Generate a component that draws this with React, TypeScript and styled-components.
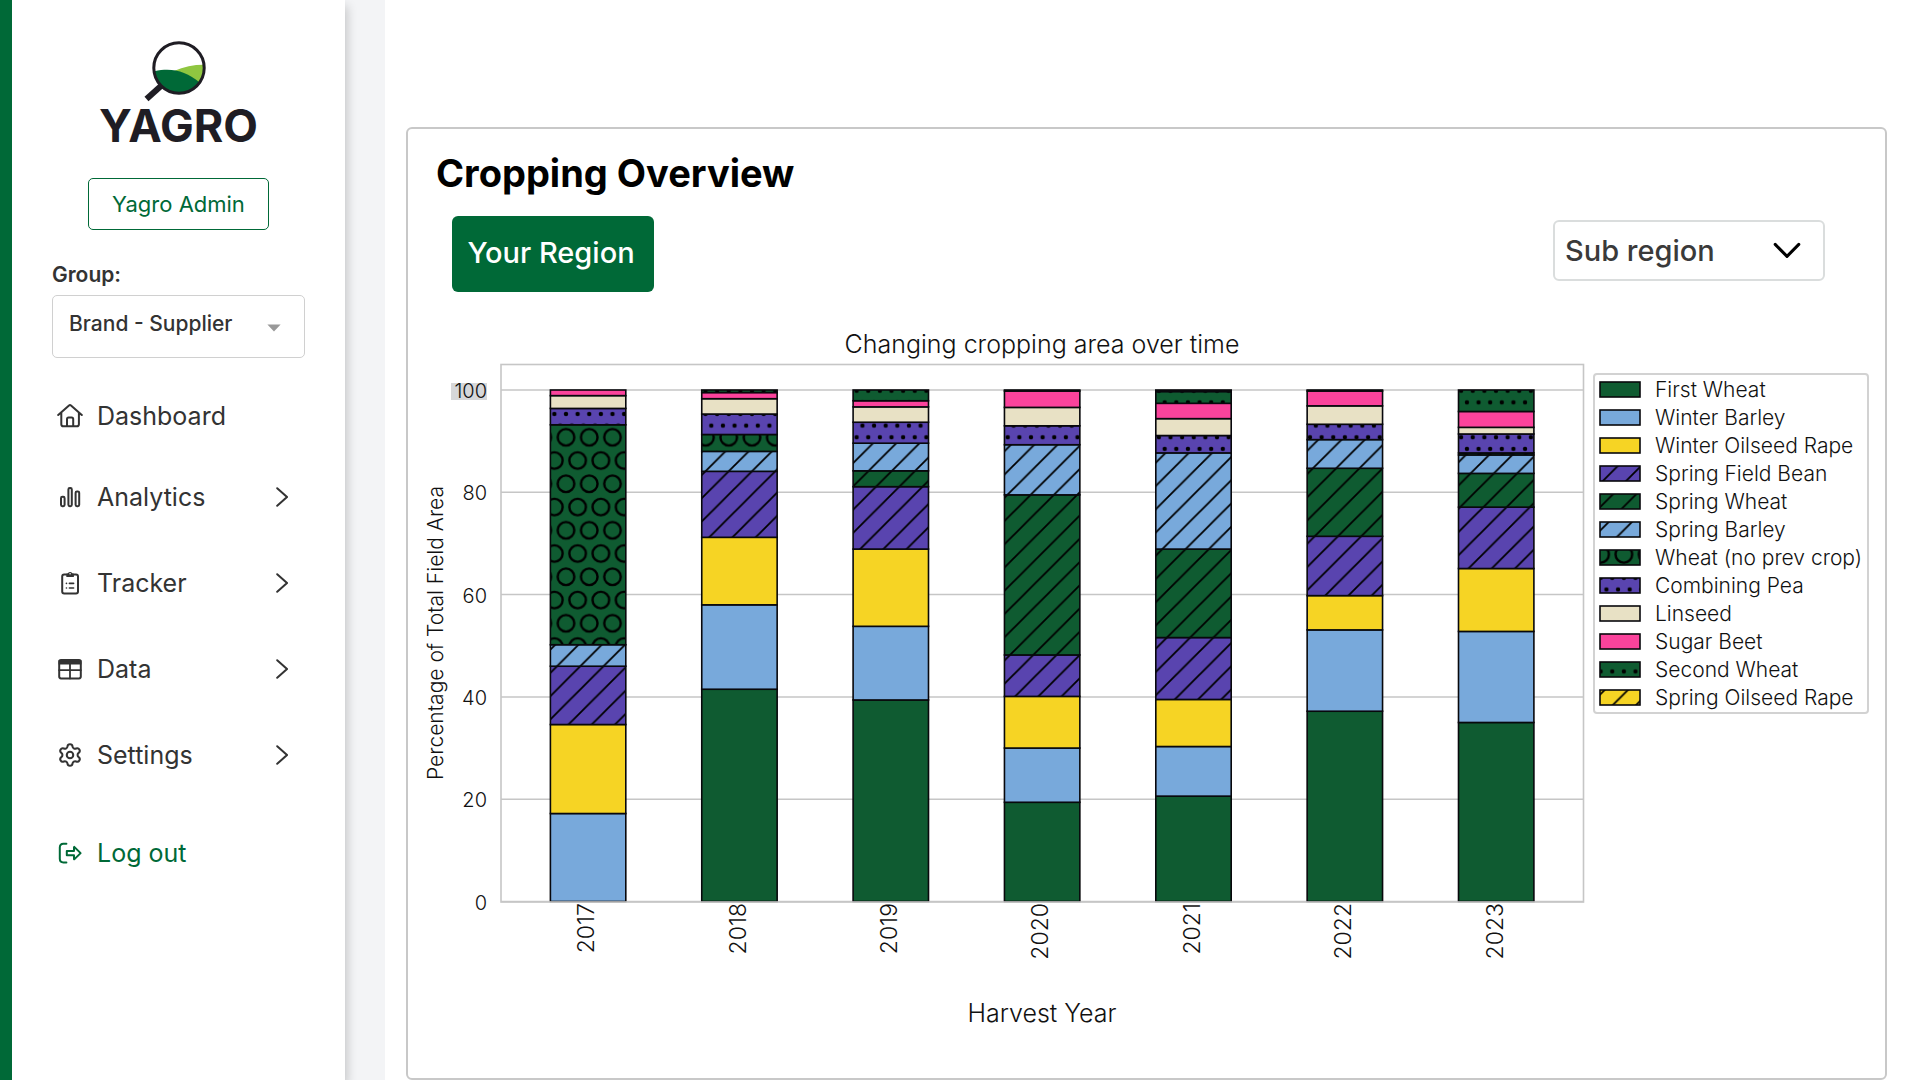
import React from "react";
import styled, { createGlobalStyle } from "styled-components";
import { Settings } from "lucide-react";

const GlobalStyle = createGlobalStyle`
  *, *::before, *::after { box-sizing: border-box; }
  body {
    margin: 0;
    background: #fff;
    color: #333;
    font-family: Inter, "Open Sans", sans-serif;
  }
`;

const GREEN = "#006937";

/* ---------- layout ---------- */

const Shell = styled.div`
  display: flex;
  min-height: 100vh;
  background: #f3f4f6;
`;

const Sidebar = styled.aside`
  flex: none;
  display: flex;
  flex-direction: column;
  width: 345px;
  padding: 40px 40px 0;
  border-left: 12px solid ${GREEN};
  background: #fff;
  box-shadow: 2px 6px 10px rgba(0, 0, 0, 0.2);
`;

const Main = styled.main`
  flex: 1;
  min-width: 0;
  display: flex;
  flex-direction: column;
  margin-left: 40px;
  padding: 127px 33px 0 21px;
  background: #fff;
`;

/* ---------- sidebar ---------- */

const Brand = styled.a`
  display: flex;
  flex-direction: column;
  align-items: center;
  color: #1f1d24;
  text-decoration: none;
`;

const Glass = styled.svg`
  display: block;
  width: 70px;
  height: 62px;
`;

const Wordmark = styled.span`
  font-size: 45px;
  font-weight: 700;
  line-height: 48px;
`;

const AdminButton = styled.button`
  align-self: center;
  width: 181px;
  height: 52px;
  margin-top: 28px;
  padding: 0;
  border: 1px solid ${GREEN};
  border-radius: 5px;
  background: #fff;
  color: ${GREEN};
  font: 400 22px Inter, sans-serif;
`;

const GroupLabel = styled.label`
  margin: 33px 0 8px;
  font-size: 21px;
  font-weight: 600;
  line-height: 24px;
`;

const SelectBox = styled.div`
  position: relative;
`;

const GroupSelect = styled.select`
  appearance: none;
  display: block;
  width: 100%;
  height: 63px;
  padding: 0 40px 6px 16px;
  border: 1px solid #d0d0d0;
  border-radius: 5px;
  background: #fff;
  color: #333;
  font: 500 21px Inter, sans-serif;
`;

const Caret = styled.svg`
  position: absolute;
  right: 24px;
  top: 29px;
  width: 14px;
  height: 8px;
  pointer-events: none;
`;

const Nav = styled.nav`
  display: flex;
  flex-direction: column;
  margin-top: 20px;
`;

const NavLink = styled.a<{ $first?: boolean; $exit?: boolean }>`
  display: flex;
  align-items: center;
  gap: 14px;
  height: ${(p) => (p.$first ? 76 : 86)}px;
  margin-top: ${(p) => (p.$exit ? 12 : 0)}px;
  padding: 0 17px 0 5px;
  color: ${(p) => (p.$exit ? GREEN : "#333")};
  font-size: 25px;
  font-weight: 400;
  text-decoration: none;
`;

const NavIcon = styled.svg`
  flex: none;
  width: 26px;
  height: 26px;
  fill: none;
  stroke: currentColor;
  stroke-width: 2;
  stroke-linecap: round;
  stroke-linejoin: round;
`;

const Chevron = styled.svg`
  width: 12px;
  height: 20px;
  margin-left: auto;
  fill: none;
  stroke: currentColor;
  stroke-width: 2;
  stroke-linecap: round;
`;

/* ---------- card ---------- */

const Card = styled.section`
  flex: 1;
  display: flex;
  flex-direction: column;
  padding: 20px 16px 20px 12px;
  border: 2px solid #c8c8c8;
  border-radius: 6px;
`;

const Title = styled.h1`
  margin: 0 16px;
  color: #000;
  font-size: 38px;
  font-weight: 700;
  line-height: 48px;
`;

const Toolbar = styled.div`
  display: flex;
  align-items: flex-start;
  justify-content: space-between;
  margin: 19px 44px 28px 32px;
`;

const RegionButton = styled.button`
  width: 202px;
  height: 76px;
  padding: 0 4px 4px 0;
  border: 0;
  border-radius: 6px;
  background: ${GREEN};
  color: #fff;
  font: 500 29px Inter, sans-serif;
`;

const RegionBox = styled(SelectBox)`
  width: 272px;
  margin-top: 4px;
`;

const RegionSelect = styled.select`
  appearance: none;
  display: block;
  width: 100%;
  height: 61px;
  padding: 0 60px 0 10px;
  border: 2px solid #dadddd;
  border-radius: 6px;
  background: #fff;
  color: #3a3a3a;
  font: 500 29px Inter, sans-serif;
`;

const RegionChevron = styled.svg`
  position: absolute;
  right: 24px;
  top: 22px;
  width: 28px;
  height: 18px;
  fill: none;
  stroke: #000;
  stroke-width: 3;
  stroke-linecap: round;
  stroke-linejoin: round;
  pointer-events: none;
`;

const ChartRow = styled.div`
  display: flex;
  align-items: flex-start;
  gap: 8px;
`;

const ChartSvg = styled.svg`
  display: block;
  flex: 1;
  min-width: 0;
  font-family: Inter, sans-serif;
  font-weight: 300;
  fill: #111;
`;

const Legend = styled.ul`
  flex: none;
  width: 276px;
  margin: 53px 0 0;
  padding: 0 4px 1px;
  border: 2px solid #d2d2d2;
  border-radius: 4px;
  list-style: none;
`;

const LegendItem = styled.li`
  display: flex;
  align-items: center;
  gap: 14px;
  height: 28px;
  color: #111;
  font-size: 21px;
  font-weight: 300;
  white-space: nowrap;
`;

const Swatch = styled.svg`
  flex: none;
  width: 42px;
  height: 17px;
`;

/* ---------- data ---------- */

type Crop = { name: string; color: string; hatch?: "diagonal" | "rings" | "dots" };

const CROPS: Record<string, Crop> = {
  FW: { name: "First Wheat", color: "#0f5b31" },
  WB: { name: "Winter Barley", color: "#78a9db" },
  WO: { name: "Winter Oilseed Rape", color: "#f6d424" },
  FB: { name: "Spring Field Bean", color: "#5944af", hatch: "diagonal" },
  SW: { name: "Spring Wheat", color: "#0f5b31", hatch: "diagonal" },
  SB: { name: "Spring Barley", color: "#78a9db", hatch: "diagonal" },
  NP: { name: "Wheat (no prev crop)", color: "#0f5b31", hatch: "rings" },
  CP: { name: "Combining Pea", color: "#5944af", hatch: "dots" },
  LI: { name: "Linseed", color: "#e8e1c5" },
  BE: { name: "Sugar Beet", color: "#fb439c" },
  S2: { name: "Second Wheat", color: "#0f5b31", hatch: "dots" },
  SO: { name: "Spring Oilseed Rape", color: "#f6d424", hatch: "diagonal" },
};

/* Each entry is a crop and the cumulative percentage at its upper edge. */
const YEARS: { year: number; stack: [string, number][] }[] = [
  { year: 2017, stack: [["WB", 17.2], ["WO", 34.6], ["FB", 46], ["SB", 50.2], ["NP", 93.2], ["CP", 96.4], ["LI", 98.9], ["BE", 100]] },
  { year: 2018, stack: [["FW", 41.5], ["WB", 58], ["WO", 71.2], ["FB", 84.1], ["SB", 88], ["NP", 91.3], ["CP", 95.3], ["LI", 98.3], ["BE", 99.5], ["S2", 100]] },
  { year: 2019, stack: [["FW", 39.4], ["WB", 53.8], ["WO", 68.9], ["FB", 81.1], ["SW", 84.2], ["SB", 89.6], ["CP", 93.7], ["LI", 96.7], ["BE", 97.9], ["S2", 100]] },
  { year: 2020, stack: [["FW", 19.4], ["WB", 30], ["WO", 40.1], ["FB", 48.2], ["SW", 79.5], ["SB", 89.3], ["CP", 93], ["LI", 96.6], ["BE", 99.8], ["S2", 100]] },
  { year: 2021, stack: [["FW", 20.6], ["WB", 30.3], ["WO", 39.5], ["FB", 51.6], ["SW", 68.9], ["SB", 87.7], ["CP", 91.1], ["LI", 94.4], ["BE", 97.4], ["S2", 99.7], ["SO", 100]] },
  { year: 2022, stack: [["FW", 37.2], ["WB", 53.1], ["WO", 59.8], ["FB", 71.4], ["SW", 84.7], ["SB", 90.3], ["CP", 93.3], ["LI", 96.9], ["BE", 99.8], ["S2", 100]] },
  { year: 2023, stack: [["FW", 35], ["WB", 52.8], ["WO", 65.1], ["FB", 77.1], ["SW", 83.7], ["SB", 87.3], ["NP", 87.7], ["CP", 91.4], ["LI", 92.7], ["BE", 95.8], ["S2", 100]] },
];

const TICKS = [0, 20, 40, 60, 80, 100];
const BASE = 901.5;
const UNIT = 5.115;
const yAt = (v: number) => BASE - v * UNIT;
const P = 23.25;

function Hatches() {
  return (
    <defs>
      <pattern id="diagonal" patternUnits="userSpaceOnUse" x={14.25} y={0} width={P} height={P}>
        <path
          d={`M0 ${P}L${P} 0M-3 3L3 -3M${P - 3} ${P + 3}L${P + 3} ${P - 3}`}
          stroke="#000"
          strokeWidth={1.8}
        />
      </pattern>
      <pattern id="rings" patternUnits="userSpaceOnUse" x={566 - P / 2} y={437.3 - P / 2} width={P} height={P * 2}>
        <g fill="none" stroke="#000" strokeWidth={2.4}>
          <circle cx={P / 2} cy={P / 2} r={8.3} />
          <circle cx={0} cy={P * 1.5} r={8.3} />
          <circle cx={P} cy={P * 1.5} r={8.3} />
        </g>
      </pattern>
      <pattern id="dots" patternUnits="userSpaceOnUse" x={566 - P / 4} y={414 - P / 4} width={P / 2} height={P}>
        <circle cx={P / 4} cy={P / 4} r={2.2} fill="#000" />
        <circle cx={0} cy={P * 0.75} r={2.2} fill="#000" />
        <circle cx={P / 2} cy={P * 0.75} r={2.2} fill="#000" />
      </pattern>
    </defs>
  );
}

function Block({ crop, x, y, w, h }: { crop: Crop; x: number; y: number; w: number; h: number }) {
  return (
    <g>
      <rect x={x} y={y} width={w} height={h} fill={crop.color} />
      {crop.hatch && <rect x={x} y={y} width={w} height={h} fill={`url(#${crop.hatch})`} />}
      <rect x={x} y={y} width={w} height={h} fill="none" stroke="#08080c" strokeWidth={1.6} />
    </g>
  );
}

function Chart() {
  return (
    <ChartSvg viewBox="420 320 1165 720" role="img" aria-label="Changing cropping area over time">
      <Hatches />
      <text x={1042} y={353} fontSize={25} textAnchor="middle">Changing cropping area over time</text>
      <rect x={451} y={383} width={36} height={17} fill="#d6d7d9" />
      {TICKS.map((t) => (
        <g key={t}>
          <line x1={501} x2={1584} y1={yAt(t)} y2={yAt(t)} stroke="#c6c6c6" strokeWidth={1.5} />
          <text x={487} y={yAt(t) + 8} fontSize={20} textAnchor="end">{t}</text>
        </g>
      ))}
      {YEARS.map(({ year, stack }, i) => {
        const x = 550.4 + i * 151.35;
        return (
          <g key={year}>
            {stack.map(([id, top], j) => {
              const bottom = j ? stack[j - 1][1] : 0;
              return (
                <Block key={id} crop={CROPS[id]} x={x} y={yAt(top)} w={75.4} h={(top - bottom) * UNIT} />
              );
            })}
            <text transform={`translate(${x + 44} 903) rotate(-90)`} fontSize={23} textAnchor="end">{year}</text>
          </g>
        );
      })}
      <rect x={501} y={364.5} width={1082.5} height={537.5} fill="none" stroke="#c6c6c6" strokeWidth={1.6} />
      <text transform="translate(443 633) rotate(-90)" fontSize={21} textAnchor="middle">
        Percentage of Total Field Area
      </text>
      <text x={1042} y={1022} fontSize={25} textAnchor="middle">Harvest Year</text>
    </ChartSvg>
  );
}

/* ---------- icons ---------- */

const icons = {
  home: (
    <NavIcon viewBox="0 0 26 26">
      <path d="M1.2 12L12 2.4Q13 1.5 14 2.4L24.8 12M4.3 9.6V21.2Q4.3 23.3 6.4 23.3H19.8Q21.9 23.3 21.9 21.2V9.6M10 23V16.2Q10 14.6 11.6 14.6H14.6Q16.2 14.6 16.2 16.2V23" />
    </NavIcon>
  ),
  bars: (
    <NavIcon viewBox="0 0 26 26">
      <rect x="4" y="12.8" width="3.6" height="9.4" rx="1.4" />
      <rect x="11.4" y="4" width="3.4" height="18.2" rx="1.4" />
      <rect x="18.6" y="7.4" width="3.6" height="14.8" rx="1.4" />
    </NavIcon>
  ),
  clipboard: (
    <NavIcon viewBox="0 0 26 26">
      <rect x="5.2" y="4.6" width="15.8" height="18.8" rx="2" />
      <path d="M10 6.4V4.2H11.2A2 2 0 0 1 15 4.2H16.2V6.4Z" fill="currentColor" strokeWidth="1.4" />
      <circle cx="13.1" cy="3.7" r="0.8" fill="#fff" stroke="none" />
      <path d="M9.4 13.4H9.5M12.4 13.4H16.6M9.4 18H9.5M12.4 18H16.6" strokeWidth="1.6" />
    </NavIcon>
  ),
  table: (
    <NavIcon viewBox="0 0 26 26">
      <rect x="2.2" y="4" width="21.6" height="18.4" rx="1.8" />
      <path d="M2.2 4.6H23.8V8H2.2Z" fill="currentColor" strokeWidth="1.2" />
      <path d="M13 8V22.4M2.2 14.2H23.8" strokeWidth="1.8" />
    </NavIcon>
  ),
  gear: <Settings size={26} strokeWidth={1.9} />,
  exit: (
    <NavIcon viewBox="0 0 26 26">
      <path d="M9.4 3.8H6.4Q2.8 3.8 2.8 7.4V18.8Q2.8 22.4 6.4 22.4H9.4" />
      <path d="M9.8 11H17V7.2Q17 6.6 17.5 7.1L23.6 13.1L17.5 19.1Q17 19.6 17 19V15.2H9.8Z" />
    </NavIcon>
  ),
};

const NAV: { label: string; icon: React.ReactNode; opens: boolean }[] = [
  { label: "Dashboard", icon: icons.home, opens: false },
  { label: "Analytics", icon: icons.bars, opens: true },
  { label: "Tracker", icon: icons.clipboard, opens: true },
  { label: "Data", icon: icons.table, opens: true },
  { label: "Settings", icon: icons.gear, opens: true },
];

export default function App() {
  return (
    <>
      <GlobalStyle />
      <Shell>
        <Sidebar>
          <Brand href="#">
            <Glass viewBox="144 40 70 62" aria-hidden="true">
              <path d="M174 71C184 66.5 194 64.6 204.5 64.7C204.6 71 203 77 198.5 82.5C191 77 183 72 174 71Z" fill="#8fc640" />
              <path d="M154.5 71.2C172 67.5 186 71 199.6 82.6C188 98.5 157 96.5 154.5 71.2Z" fill="#006937" />
              <path d="M161.5 85.5L146.5 99" stroke="#1f1d24" strokeWidth="6" />
              <circle cx="179" cy="68" r="25.2" fill="none" stroke="#1f1d24" strokeWidth="3" />
            </Glass>
            <Wordmark>YAGRO</Wordmark>
          </Brand>
          <AdminButton type="button">Yagro Admin</AdminButton>
          <GroupLabel htmlFor="group">Group:</GroupLabel>
          <SelectBox>
            <GroupSelect id="group">
              <option>Brand - Supplier</option>
            </GroupSelect>
            <Caret viewBox="0 0 14 8" aria-hidden="true">
              <path d="M0.4 0.6H13.6L7 7.6Z" fill="#999" />
            </Caret>
          </SelectBox>
          <Nav>
            {NAV.map((item, i) => (
              <NavLink key={item.label} href="#" $first={i === 0}>
                {item.icon}
                {item.label}
                {item.opens && (
                  <Chevron viewBox="0 0 12 20" aria-hidden="true">
                    <path d="M1.2 1.2L11 10L1.2 18.8" />
                  </Chevron>
                )}
              </NavLink>
            ))}
            <NavLink href="#" $exit>
              {icons.exit}
              Log out
            </NavLink>
          </Nav>
        </Sidebar>
        <Main>
          <Card>
            <Title>Cropping Overview</Title>
            <Toolbar>
              <RegionButton type="button">Your Region</RegionButton>
              <RegionBox>
                <RegionSelect aria-label="Sub region">
                  <option>Sub region</option>
                </RegionSelect>
                <RegionChevron viewBox="0 0 28 18" aria-hidden="true">
                  <path d="M2.2 2.4L14 14.4L25.8 2.4" />
                </RegionChevron>
              </RegionBox>
            </Toolbar>
            <ChartRow>
              <Chart />
              <Legend>
                {Object.entries(CROPS).map(([id, crop], i) => {
                  const y = 382.3 + i * 27.8;
                  return (
                    <LegendItem key={id}>
                      <Swatch viewBox={`1599 ${y - 1} 42 17`} aria-hidden="true">
                        <Block crop={crop} x={1600} y={y} w={40} h={15} />
                      </Swatch>
                      {crop.name}
                    </LegendItem>
                  );
                })}
              </Legend>
            </ChartRow>
          </Card>
        </Main>
      </Shell>
    </>
  );
}
